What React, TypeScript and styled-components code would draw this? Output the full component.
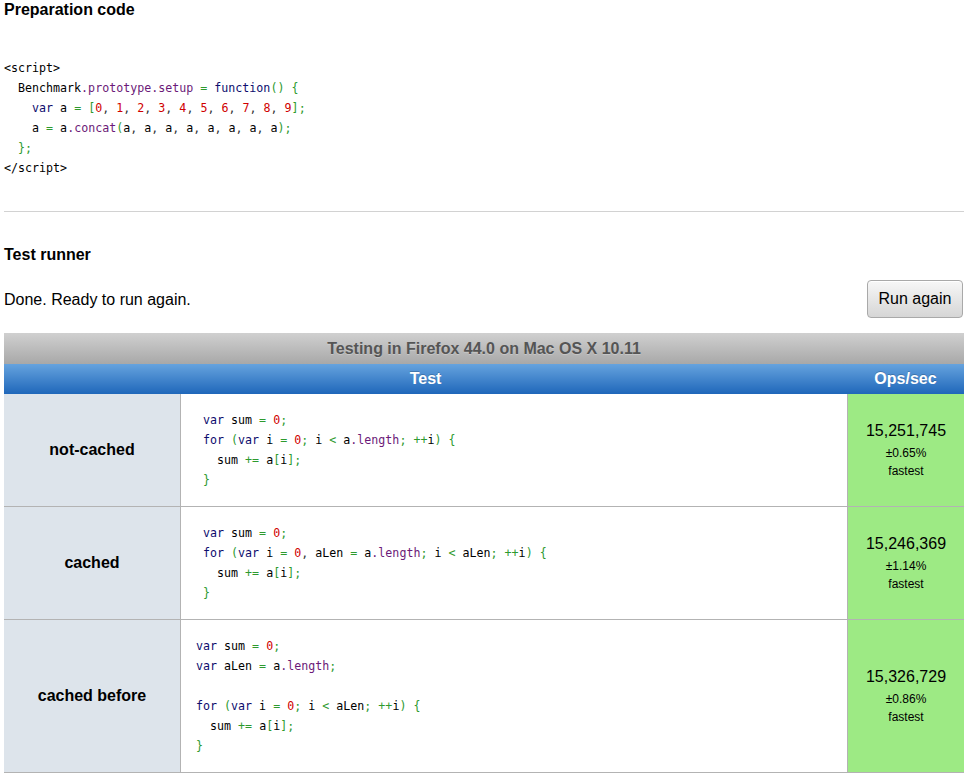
import React from "react";
import styled, { createGlobalStyle } from "styled-components";

const GlobalStyle = createGlobalStyle`
  html, body { margin: 0; padding: 0; background: #fff; }
  body { font-family: "Liberation Sans", Arial, Helvetica, sans-serif; color: #000; }
`;

const Page = styled.div`
  width: 960px;
  margin-left: 4px;
`;

const SectionTitle = styled.h2<{ $top?: number }>`
  margin: ${(p) => p.$top ?? 0}px 0 0;
  font-size: 16px;
  line-height: 20px;
  font-weight: bold;
`;

const Code = styled.pre<{ $top?: number }>`
  margin: ${(p) => p.$top ?? 0}px 0 0;
  font-family: "DejaVu Sans Mono", "Liberation Mono", monospace;
  font-size: 11.65px;
  line-height: 20px;
  color: #000;
  white-space: pre;
`;

const Rule = styled.hr`
  margin: 33px 0 0;
  border: 0;
  border-top: 1px solid #d2d2d2;
  height: 0;
`;

const StatusRow = styled.div`
  margin-top: 15px;
  display: flex;
  align-items: center;
  justify-content: space-between;
`;

const StatusText = styled.div`
  font-size: 16px;
  line-height: 20px;
  padding-top: 2px;
`;

const RunButton = styled.button`
  width: 96px;
  height: 38px;
  margin-right: 1px;
  padding: 0;
  font-family: "Liberation Sans", Arial, sans-serif;
  font-size: 16px;
  color: #000;
  border: 1px solid #a9a9a9;
  border-radius: 4px;
  background: linear-gradient(#f7f7f7, #d6d6d6);
  box-shadow: inset 0 1px 0 #fff;
`;

const Results = styled.div`
  margin-top: 15px;
  display: grid;
  grid-template-columns: 176px 667px 117px;
`;

const BrowserBar = styled.div`
  grid-column: 1 / -1;
  height: 31px;
  display: flex;
  align-items: center;
  justify-content: center;
  background: linear-gradient(#d0d0d0, #a8a8a8);
  color: #555;
  font-weight: bold;
  font-size: 16px;
  text-shadow: 0 1px 0 rgba(255, 255, 255, 0.25);
`;

const HeadCell = styled.div<{ $span?: number }>`
  grid-column: span ${(p) => p.$span ?? 1};
  height: 30px;
  display: flex;
  align-items: center;
  justify-content: center;
  background: linear-gradient(#66a3de, #1f67ba);
  color: #fff;
  font-weight: bold;
  font-size: 16px;
  text-shadow: 0 -1px 0 rgba(0, 0, 0, 0.2);
`;

const NameCell = styled.div`
  background: #dde4eb;
  border-bottom: 1px solid #b3b3b3;
  display: flex;
  align-items: center;
  justify-content: center;
  font-weight: bold;
  font-size: 16px;
`;

const CodeCell = styled.div`
  background: #fff;
  border-left: 1px solid #b3b3b3;
  border-bottom: 1px solid #b3b3b3;
  padding: 16px 15px 16px;
`;

const OpsCell = styled.div`
  background: #9dea84;
  border-left: 1px solid #b3b3b3;
  border-bottom: 1px solid #b3b3b3;
  display: flex;
  flex-direction: column;
  align-items: center;
  justify-content: center;
`;

const OpsValue = styled.div`
  font-size: 16px;
  line-height: 20px;
  margin-bottom: 3px;
`;

const OpsNote = styled.div`
  font-size: 12px;
  line-height: 18px;
`;

type Kind = "kwd" | "num" | "prop" | "pun" | "pln" | "com";

const colors: Record<Kind, string> = {
  kwd: "#0d0d6e",
  num: "#d00000",
  prop: "#6b1a78",
  pun: "#2e9a2e",
  pln: "#000",
  com: "#333",
};

const Tok = styled.span<{ $kind: Kind }>`
  color: ${(p) => colors[p.$kind]};
`;

const KEYWORDS = new Set(["var", "function", "for"]);

function highlight(line: string, key: number) {
  const re = /(\s+)|(\d+)|(\.[A-Za-z_]\w*)|([A-Za-z_]\w*)|(\+\+|\+=|[=<>(){}\[\];])|(,)|(.)/g;
  const out: React.ReactNode[] = [];
  let m: RegExpExecArray | null;
  let i = 0;
  while ((m = re.exec(line))) {
    let kind: Kind = "pln";
    if (m[2]) kind = "num";
    else if (m[3]) kind = "prop";
    else if (m[4]) kind = KEYWORDS.has(m[4]) ? "kwd" : "pln";
    else if (m[5]) kind = "pun";
    else if (m[6]) kind = "com";
    out.push(
      <Tok key={i++} $kind={kind}>
        {m[0]}
      </Tok>
    );
  }
  return (
    <React.Fragment key={key}>
      {out}
      {"\n"}
    </React.Fragment>
  );
}

function CodeBlock({ lines, top }: { lines: string[]; top?: number }) {
  return (
    <Code $top={top}>
      {lines.map((l, i) =>
        l.startsWith("<") ? (
          <React.Fragment key={i}>
            <Tok $kind="pln">{l}</Tok>
            {"\n"}
          </React.Fragment>
        ) : (
          highlight(l, i)
        )
      )}
    </Code>
  );
}

const prep = [
  "<script>",
  "  Benchmark.prototype.setup = function() {",
  "    var a = [0, 1, 2, 3, 4, 5, 6, 7, 8, 9];",
  "    a = a.concat(a, a, a, a, a, a, a, a);",
  "  };",
  "</script>",
];

const tests = [
  {
    name: "not-cached",
    code: [
      " var sum = 0;",
      " for (var i = 0; i < a.length; ++i) {",
      "   sum += a[i];",
      " }",
    ],
    ops: "15,251,745",
    err: "±0.65%",
  },
  {
    name: "cached",
    code: [
      " var sum = 0;",
      " for (var i = 0, aLen = a.length; i < aLen; ++i) {",
      "   sum += a[i];",
      " }",
    ],
    ops: "15,246,369",
    err: "±1.14%",
  },
  {
    name: "cached before",
    code: [
      "var sum = 0;",
      "var aLen = a.length;",
      "",
      "for (var i = 0; i < aLen; ++i) {",
      "  sum += a[i];",
      "}",
    ],
    ops: "15,326,729",
    err: "±0.86%",
  },
];

export default function App() {
  return (
    <>
      <GlobalStyle />
      <Page>
        <SectionTitle>Preparation code</SectionTitle>
        <CodeBlock lines={prep} top={38} />
        <Rule />
        <SectionTitle $top={33}>Test runner</SectionTitle>
        <StatusRow>
          <StatusText>Done. Ready to run again.</StatusText>
          <RunButton>Run again</RunButton>
        </StatusRow>
        <Results>
          <BrowserBar>Testing in Firefox 44.0 on Mac OS X 10.11</BrowserBar>
          <HeadCell $span={2}>Test</HeadCell>
          <HeadCell>Ops/sec</HeadCell>
          {tests.map((t) => (
            <React.Fragment key={t.name}>
              <NameCell>{t.name}</NameCell>
              <CodeCell>
                <CodeBlock lines={t.code} />
              </CodeCell>
              <OpsCell>
                <OpsValue>{t.ops}</OpsValue>
                <OpsNote>{t.err}</OpsNote>
                <OpsNote>fastest</OpsNote>
              </OpsCell>
            </React.Fragment>
          ))}
        </Results>
      </Page>
    </>
  );
}
